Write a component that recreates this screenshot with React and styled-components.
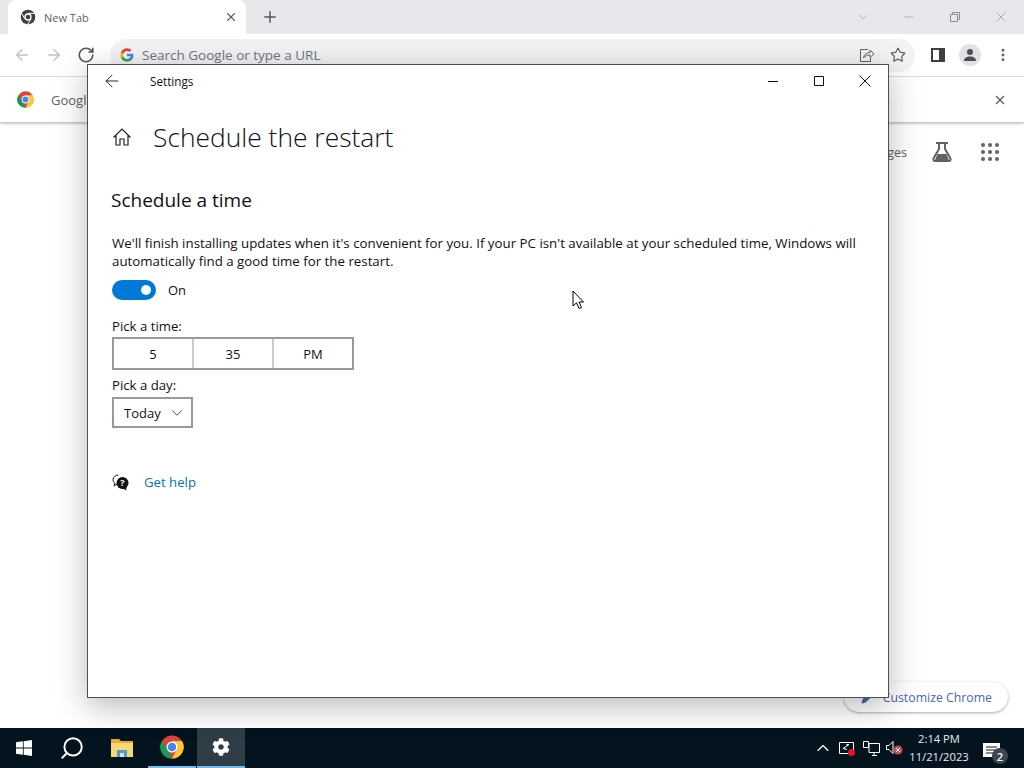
import React from "react";
import styled, { createGlobalStyle } from "styled-components";
import {
  ArrowLeft,
  ArrowRight,
  RotateCw,
  Star,
  X,
  Plus,
  ChevronDown,
  Minus,
  EllipsisVertical,
  ChevronUp,
  Search,
  Pencil,
} from "lucide-react";
import { FaCog } from "react-icons/fa";

const GlobalStyle = createGlobalStyle`
  html, body { margin: 0; padding: 0; background: #fff; }
  * { box-sizing: border-box; }
  body { font-family: "Open Sans", "Noto Sans", sans-serif; }
`;

const Screen = styled.div`
  width: 1024px;
  height: 768px;
  display: flex;
  flex-direction: column;
  overflow: hidden;
`;

const Desktop = styled.div`
  position: relative;
  flex: 1;
  display: flex;
  flex-direction: column;
  background: #fff;
`;

const TabStrip = styled.div`
  height: 34px;
  background: #e6e8ec;
  display: flex;
  align-items: flex-end;
  padding-left: 8px;
  color: #5f6368;
`;

const Tab = styled.div`
  width: 238px;
  height: 34px;
  background: #fff;
  border-radius: 8px 8px 0 0;
  display: flex;
  align-items: center;
  padding: 0 8px 0 12px;
  font-size: 11px;
  color: #5f6368;
  gap: 8px;
`;

const TabTitle = styled.span`
  flex: 1;
`;

const NewTab = styled.div`
  width: 48px;
  display: flex;
  justify-content: center;
  align-self: center;
  color: #55585c;
`;

const WinButtons = styled.div`
  margin-left: auto;
  align-self: center;
  display: flex;
  align-items: center;
  color: #8a8d91;
`;

const WinButton = styled.div`
  width: 46px;
  display: flex;
  justify-content: center;
  align-items: center;
`;

const Toolbar = styled.div`
  height: 43px;
  display: flex;
  align-items: center;
  padding-left: 13px;
  border-bottom: 1px solid #dadce0;
  color: #5f6368;
`;

const NavButtons = styled.div`
  display: flex;
  gap: 14px;
  width: 97px;
  align-items: center;
`;

const Omnibox = styled.div`
  width: 805px;
  height: 33px;
  background: #f1f3f4;
  border-radius: 16px;
  display: flex;
  align-items: center;
  padding: 0 9px 0 10px;
  gap: 8px;
  font-size: 13.5px;
  color: #70757a;
`;

const OmniText = styled.span`
  flex: 1;
`;

const OmniIcons = styled.div`
  display: flex;
  gap: 15px;
  align-items: center;
  color: #5f6368;
`;

const ToolIcons = styled.div`
  display: flex;
  align-items: center;
  gap: 14px;
  margin-left: 16px;
`;

const Avatar = styled.div`
  width: 22px;
  height: 22px;
  border-radius: 50%;
  background: #dfe1e5;
  display: flex;
  align-items: center;
  justify-content: center;
`;

const InfoBar = styled.div`
  height: 45px;
  display: flex;
  align-items: center;
  padding: 0 17px 0 17px;
  gap: 17px;
  font-size: 13px;
  color: #5f6368;
  box-shadow: 0 2px 2px rgba(0, 0, 0, 0.22);
`;

const InfoText = styled.span`
  flex: 1;
`;

const PageTools = styled.div`
  display: flex;
  align-items: center;
  justify-content: flex-end;
  height: 60px;
  padding-right: 25px;
  color: #5f6368;
  font-size: 12.5px;
  gap: 25px;
`;

const FlaskSvg = styled.svg`
  margin-right: 4px;
`;

const Customize = styled.div`
  position: absolute;
  left: 844px;
  top: 682px;
  width: 164px;
  height: 30px;
  border-radius: 15px;
  background: #fff;
  box-shadow: 0 1px 3px rgba(60, 64, 67, 0.45);
  display: flex;
  align-items: center;
  justify-content: flex-end;
  gap: 8px;
  padding-right: 16px;
  font-size: 12.3px;
  color: #4a68b0;
`;

const Window = styled.div`
  position: absolute;
  left: 87px;
  top: 64px;
  width: 802px;
  height: 634px;
  background: #fff;
  border: 1px solid #4e4e4e;
  box-shadow: 0 8px 30px rgba(0, 0, 0, 0.28);
  color: #111;
  display: flex;
  flex-direction: column;
`;

const TitleBar = styled.div`
  height: 31px;
  display: flex;
  align-items: center;
  padding-left: 14px;
  font-size: 11.7px;
  flex-shrink: 0;
`;

const TitleText = styled.span`
  margin-left: 28px;
  flex: 1;
`;

const WindowControl = styled.div`
  width: 46px;
  display: flex;
  justify-content: center;
  align-items: center;
`;

const Content = styled.div`
  padding: 0 23px;
  display: flex;
  flex-direction: column;
  align-items: flex-start;
`;

const Heading = styled.div`
  display: flex;
  align-items: center;
  margin-top: 21px;
  height: 40px;
  gap: 21px;
  padding-left: 1px;
`;

const PageTitle = styled.h1`
  margin: 0;
  font-size: 26.4px;
  font-weight: 300;
  line-height: 40px;
`;

const SectionTitle = styled.h2`
  margin: 30px 0 0;
  font-size: 19px;
  font-weight: 400;
  line-height: 26px;
`;

const Body = styled.p`
  margin: 21px 0 0 1px;
  font-size: 13.3px;
  line-height: 18px;
  width: 760px;
`;

const ToggleRow = styled.div`
  display: flex;
  align-items: center;
  gap: 12px;
  font-size: 13px;
  margin: 10px 0 0 1px;
  height: 20px;
`;

const Toggle = styled.div`
  width: 44px;
  height: 20px;
  border-radius: 10px;
  background: #0078d7;
  display: flex;
  align-items: center;
  justify-content: flex-end;
  padding-right: 5px;
`;

const Knob = styled.div`
  width: 10px;
  height: 10px;
  border-radius: 50%;
  background: #fff;
`;

const FieldLabel = styled.div`
  font-size: 13.2px;
  line-height: 18px;
  margin: ${(p) => p.$top}px 0 0 1px;
`;

const TimePicker = styled.div`
  display: flex;
  width: 242px;
  height: 33px;
  margin: 2px 0 0 1px;
  border: 2px solid #999;
`;

const TimeCell = styled.div`
  flex: 1;
  display: flex;
  align-items: center;
  justify-content: center;
  font-size: 13px;
  & + & {
    border-left: 2px solid #ccc;
  }
`;

const DaySelect = styled.div`
  width: 81px;
  height: 31px;
  margin: 3px 0 0 1px;
  border: 2px solid #999;
  display: flex;
  align-items: center;
  justify-content: space-between;
  padding: 0 5px 0 10px;
  font-size: 13px;
`;

const HelpRow = styled.div`
  display: flex;
  align-items: center;
  gap: 15px;
  margin: 44px 0 0 1px;
  font-size: 13.2px;
  color: #0a6fb0;
  height: 20px;
`;

const Cursor = styled.svg`
  position: absolute;
  left: 484px;
  top: 225px;
`;

const Taskbar = styled.div`
  height: 40px;
  background: #03141f;
  display: flex;
  align-items: stretch;
  color: #fff;
`;

const TaskItem = styled.div`
  width: 48px;
  margin-right: ${(p) => p.$gap || 0}px;
  display: flex;
  align-items: center;
  justify-content: center;
  background: ${(p) => (p.$active ? "#2f3d47" : "transparent")};
  border-bottom: ${(p) => (p.$open ? "2px solid #76b9ed" : "none")};
`;

const Tray = styled.div`
  margin-left: auto;
  display: flex;
  align-items: center;
  padding-right: 24px;
`;

const TrayIcon = styled.div`
  width: 24px;
  display: flex;
  justify-content: center;
  align-items: center;
`;

const Clock = styled.div`
  font-size: 11.2px;
  line-height: 18px;
  text-align: center;
  width: 62px;
  margin-left: 1px;
  color: #e8ecef;
`;

const Notif = styled.div`
  position: relative;
  width: 17px;
  height: 24px;
  padding-top: 4px;
  margin-left: 13px;
`;

const Badge = styled.div`
  position: absolute;
  right: -8px;
  bottom: -4px;
  width: 16px;
  height: 16px;
  border-radius: 50%;
  background: #3b4650;
  font-size: 11px;
  font-weight: 600;
  display: flex;
  align-items: center;
  justify-content: center;
`;

const ChromeLogo = ({ size = 16 }) => (
  <svg width={size} height={size} viewBox="0 0 48 48">
    <circle cx="24" cy="24" r="23" fill="#db4437" />
    <path d="M24 47 A23 23 0 0 1 4 12 L15 30 Z" fill="#0f9d58" />
    <path d="M24 47 A23 23 0 0 0 44 12 L24 12 L33 30 Z" fill="#fcc934" />
    <circle cx="24" cy="24" r="11" fill="#fff" />
    <circle cx="24" cy="24" r="8.5" fill="#4285f4" />
  </svg>
);

const TabLogo = () => (
  <svg width="16" height="16" viewBox="0 0 48 48">
    <circle cx="24" cy="24" r="22" fill="#3c4043" />
    <circle cx="24" cy="24" r="11" fill="#fff" />
    <circle cx="24" cy="24" r="7" fill="#3c4043" />
    <path d="M24 13 L44 13 M14 29 L5 13 M33 30 L23 46" stroke="#fff" strokeWidth="3" />
  </svg>
);

const GoogleG = () => (
  <svg width="14" height="14" viewBox="0 0 48 48">
    <path fill="#4285f4" d="M46 24.5c0-1.6-.1-3.1-.4-4.5H24v8.5h12.4c-.5 2.9-2.1 5.3-4.6 7v5.8h7.4C43.5 37.8 46 31.7 46 24.5z" />
    <path fill="#34a853" d="M24 47c6.2 0 11.4-2 15.2-5.7l-7.4-5.8c-2 1.4-4.7 2.2-7.8 2.2-6 0-11-4-12.9-9.5H3.5v5.9C7.3 41.7 15 47 24 47z" />
    <path fill="#fbbc05" d="M11.1 28.2c-.5-1.4-.7-2.8-.7-4.2s.3-2.9.7-4.2v-5.9H3.5C2 16.9 1 20.3 1 24s1 7.1 2.5 10.1l7.6-5.9z" />
    <path fill="#ea4335" d="M24 10.3c3.4 0 6.4 1.2 8.8 3.4l6.5-6.5C35.4 3.5 30.2 1 24 1 15 1 7.3 6.3 3.5 13.9l7.6 5.9C13 14.3 18 10.3 24 10.3z" />
  </svg>
);

const ShareIcon = () => (
  <svg width="16" height="16" viewBox="0 0 16 16" fill="none" stroke="#5f6368" strokeWidth="1">
    <path d="M9 2.5H1.5V14.5H11.5V11" />
    <path d="M4.5 11c.5-3.5 3-5.5 6.5-5.5V3l4 4-4 3.5V8c-3 0-5 1-6.5 3z" fill="#f1f3f4" />
  </svg>
);

const SidePanelIcon = () => (
  <svg width="14" height="14" viewBox="0 0 14 14">
    <path d="M0 0H14V14H0Z" fill="#3c4043" />
    <path d="M2 2H8V12H2Z" fill="#fff" />
  </svg>
);

const PersonIcon = () => (
  <svg width="14" height="14" viewBox="0 0 14 14" fill="#4a4d52">
    <circle cx="7" cy="4" r="3" />
    <path d="M1 13c0-3 2.5-4.5 6-4.5s6 1.5 6 4.5z" />
  </svg>
);

const AppsIcon = () => (
  <svg width="18" height="18" viewBox="0 0 18 18" fill="#5f6368">
    {[2, 9, 16].map((y) =>
      [2, 9, 16].map((x) => <circle key={`${x}-${y}`} cx={x} cy={y} r="2" />)
    )}
  </svg>
);

const FlaskIcon = () => (
  <FlaskSvg width="20" height="20" viewBox="0 0 20 20" fill="none" stroke="#5f6368" strokeWidth="2">
    <path d="M4 1H16M7 1V7L1.5 16.5C1 18 2 19 3 19H17C18 19 19 18 18.5 16.5L13 7V1" />
    <path d="M5.5 12H14.5L17 18H3Z" fill="#5f6368" stroke="none" />
  </FlaskSvg>
);

const RestoreIcon = () => (
  <svg width="10" height="10" viewBox="0 0 10 10" fill="none" stroke="currentColor">
    <path d="M.5 2.5H7.5V9.5H.5Z M2.5 2.5V.5H9.5V7.5H7.5" />
  </svg>
);

const HomeIcon = () => (
  <svg width="20" height="20" viewBox="0 0 20 20" fill="none" stroke="#222" strokeWidth="1.2">
    <path d="M1.5 10.5L10 2L18.5 10.5M4 8.5V18H8V12H12V18H16V8.5" />
  </svg>
);

const MinIcon = () => (
  <svg width="12" height="12" viewBox="0 0 12 12" stroke="#111">
    <path d="M1 6.5H11" />
  </svg>
);

const MaxIcon = () => (
  <svg width="12" height="12" viewBox="0 0 12 12" fill="none" stroke="#111">
    <path d="M1.5 1.5H10.5V10.5H1.5Z" />
  </svg>
);

const CloseIcon = () => (
  <svg width="12" height="12" viewBox="0 0 12 12" stroke="#111">
    <path d="M.5 .5L11.5 11.5M11.5 .5L.5 11.5" />
  </svg>
);

const HelpIcon = () => (
  <svg width="17" height="17" viewBox="0 0 17 17">
    <path d="M6.5 1C3.5 1 1 3 1 5.7c0 1.5.8 2.8 2 3.6L2 12l3-2" fill="#fff" stroke="#111" />
    <circle cx="10.5" cy="9" r="6" fill="#111" />
    <path d="M10 14l4.5 2.5-.5-4z" fill="#111" />
    <text x="10.5" y="12" fontSize="9" fontWeight="700" fill="#fff" textAnchor="middle" fontFamily="Open Sans">?</text>
  </svg>
);

const WindowsLogo = () => (
  <svg width="16" height="16" viewBox="0 0 16 16" fill="#fff">
    <path d="M0 2.3 6.9 1.3V7.6H0Z M7.7 1.2 16 0V7.6H7.7Z M0 8.4H6.9V14.7L0 13.7Z M7.7 8.4H16V16L7.7 14.8Z" />
  </svg>
);

const FolderIcon = () => (
  <svg width="22" height="20" viewBox="0 0 22 20">
    <path d="M0 1H8L10 3H22V19H0Z" fill="#e3ad3a" />
    <path d="M0 5H22V19H0Z" fill="#f8d775" />
    <path d="M6 12H16V19H6Z" fill="#4f9bd1" />
    <path d="M9 15H13V19H9Z" fill="#cfe6f6" />
  </svg>
);

const TrayMonitor = () => (
  <svg width="17" height="17" viewBox="0 0 17 17" fill="none" stroke="#fff">
    <path d="M6 3.5H16.5V12.5H6Z M9 15.5H14 M11 12.5V15.5" />
    <path d="M.5 1.5H5.5V7.5H.5Z" fill="#03141f" />
  </svg>
);

const TraySecurity = () => (
  <svg width="18" height="18" viewBox="0 0 18 18" fill="none" stroke="#fff">
    <path d="M1.5 3.5H15.5V14.5H1.5Z" />
    <path d="M5 9.5l6-4M11 5.5H8.5M5 9.5l4 1" />
    <circle cx="13.5" cy="13.5" r="3.5" fill="#e81123" stroke="none" />
  </svg>
);

const TrayVolume = () => (
  <svg width="18" height="16" viewBox="0 0 18 16">
    <path d="M.5 5.5H3L7 1.5V13.5L3 9.5H.5Z" fill="none" stroke="#fff" />
    <circle cx="12" cy="10" r="4.5" fill="#c94f4f" />
    <path d="M10 8l4 4M14 8l-4 4" stroke="#fff" />
  </svg>
);

const NotifIcon = () => (
  <svg width="17" height="14" viewBox="0 0 17 14" fill="#fff">
    <path d="M0 0H17V14H0Z" />
    <path d="M3 4H14M3 7H14M3 10H10" stroke="#03141f" />
  </svg>
);

export default function App() {
  return (
    <Screen>
      <GlobalStyle />
      <Desktop>
        <TabStrip>
          <Tab>
            <TabLogo />
            <TabTitle>New Tab</TabTitle>
            <X size={14} strokeWidth={2} />
          </Tab>
          <NewTab>
            <Plus size={18} strokeWidth={2} />
          </NewTab>
          <WinButtons>
            <WinButton>
              <ChevronDown size={14} strokeWidth={1} />
            </WinButton>
            <WinButton>
              <Minus size={14} strokeWidth={1} />
            </WinButton>
            <WinButton>
              <RestoreIcon />
            </WinButton>
            <WinButton>
              <X size={16} strokeWidth={1} />
            </WinButton>
          </WinButtons>
        </TabStrip>
        <Toolbar>
          <NavButtons>
            <ArrowLeft size={18} color="#c0c3c7" />
            <ArrowRight size={18} color="#c0c3c7" />
            <RotateCw size={18} strokeWidth={2.2} color="#55585c" />
          </NavButtons>
          <Omnibox>
            <GoogleG />
            <OmniText>Search Google or type a URL</OmniText>
            <OmniIcons>
              <ShareIcon />
              <Star size={16} strokeWidth={1.8} />
            </OmniIcons>
          </Omnibox>
          <ToolIcons>
            <SidePanelIcon />
            <Avatar>
              <PersonIcon />
            </Avatar>
            <EllipsisVertical size={16} strokeWidth={2.4} />
          </ToolIcons>
        </Toolbar>
        <InfoBar>
          <ChromeLogo size={17} />
          <InfoText>Google</InfoText>
          <X size={14} strokeWidth={2.4} />
        </InfoBar>
        <PageTools>
          <span>Images</span>
          <FlaskIcon />
          <AppsIcon />
        </PageTools>
        <Customize>
          <Pencil size={14} fill="#4a68b0" />
          Customize Chrome
        </Customize>
        <Window>
          <TitleBar>
            <ArrowLeft size={20} strokeWidth={1.1} />
            <TitleText>Settings</TitleText>
            <WindowControl>
              <MinIcon />
            </WindowControl>
            <WindowControl>
              <MaxIcon />
            </WindowControl>
            <WindowControl>
              <CloseIcon />
            </WindowControl>
          </TitleBar>
          <Content>
            <Heading>
              <HomeIcon />
              <PageTitle>Schedule the restart</PageTitle>
            </Heading>
            <SectionTitle>Schedule a time</SectionTitle>
            <Body>
              We'll finish installing updates when it's convenient for you. If your PC isn't available at your
              scheduled time, Windows will automatically find a good time for the restart.
            </Body>
            <ToggleRow>
              <Toggle>
                <Knob />
              </Toggle>
              On
            </ToggleRow>
            <FieldLabel $top={17}>Pick a time:</FieldLabel>
            <TimePicker>
              <TimeCell>5</TimeCell>
              <TimeCell>35</TimeCell>
              <TimeCell>PM</TimeCell>
            </TimePicker>
            <FieldLabel $top={6}>Pick a day:</FieldLabel>
            <DaySelect>
              Today
              <ChevronDown size={18} strokeWidth={1} />
            </DaySelect>
            <HelpRow>
              <HelpIcon />
              Get help
            </HelpRow>
          </Content>
          <Cursor width="13" height="20" viewBox="0 0 13 20">
            <path d="M1 1V16L4.5 12.8L7 18.5L9.5 17.5L7 12H11.5Z" fill="#fff" stroke="#000" />
          </Cursor>
        </Window>
      </Desktop>
      <Taskbar>
        <TaskItem>
          <WindowsLogo />
        </TaskItem>
        <TaskItem $gap={2}>
          <Search size={26} strokeWidth={1.8} style={{ transform: "scaleX(-1)" }} />
        </TaskItem>
        <TaskItem $gap={2}>
          <FolderIcon />
        </TaskItem>
        <TaskItem $open $gap={1}>
          <ChromeLogo size={24} />
        </TaskItem>
        <TaskItem $open $active>
          <FaCog size={18} />
        </TaskItem>
        <Tray>
          <TrayIcon>
            <ChevronUp size={20} strokeWidth={1.4} />
          </TrayIcon>
          <TrayIcon>
            <TraySecurity />
          </TrayIcon>
          <TrayIcon>
            <TrayMonitor />
          </TrayIcon>
          <TrayIcon>
            <TrayVolume />
          </TrayIcon>
          <Clock>
            2:14 PM
            <br />
            11/21/2023
          </Clock>
          <Notif>
            <NotifIcon />
            <Badge>2</Badge>
          </Notif>
        </Tray>
      </Taskbar>
    </Screen>
  );
}
